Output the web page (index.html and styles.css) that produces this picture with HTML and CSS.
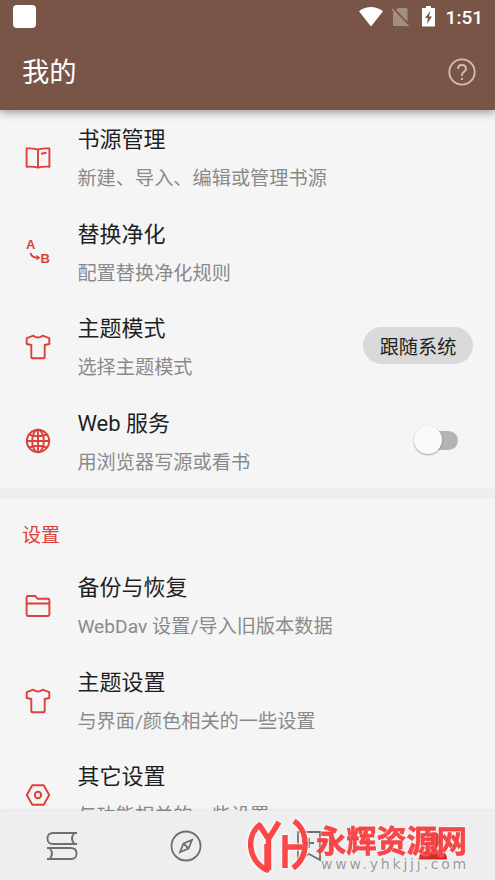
FILE: index.html
```html
<!DOCTYPE html>
<html lang="zh-CN">
<head>
<meta charset="utf-8">
<title>我的</title>
<link rel="stylesheet" href="styles.css">
</head>
<body>
<svg class="defs" width="0" height="0">
  <symbol id="shirt" viewBox="0 0 26 26"><path d="M8.500 1.700 1.700 4.200v5.800l4.600 1v12.300q0 1 1 1h11.400q1 0 1-1V11l4.600-1V4.200L17.500 1.700Q13 5.500 8.500 1.700Z"/></symbol>
</svg>
<div class="screen">
  <header class="top">
    <div class="status">
      <span class="app-square"></span>
      <svg class="wifi" width="24" height="20" viewBox="0 0 24 20"><path d="M0 4.200Q12-4 24 4.200L12 19.500Z"/></svg>
      <svg class="sim" width="20" height="20" viewBox="0 0 20 20"><path class="card" d="M7 1h8q1.500 0 1.500 1.500V18q0 1-1 1H3q-1 0-1-1V6Z"/><path class="gap" d="m2 1 17 18"/><path class="slash" d="m1 2 16.500 17.500"/></svg>
      <svg class="battery" width="14" height="21" viewBox="0 0 14 21"><path class="cell" d="M4 0h5v2h4v18.500H0V2h4Z"/><path class="bolt" d="M8.500 5 3 12h3l-1 6 5-7.500H7Z"/></svg>
      <span class="time">1:51</span>
    </div>
    <div class="bar">
      <h1>我的</h1>
      <svg class="help" width="28" height="28" viewBox="0 0 28 28"><circle cx="14" cy="14" r="12.700"/><path d="M10 11Q10 7 14 7t4 3.800c0 3-4 3-4 6.200v1"/><path d="M14 20v2"/></svg>
    </div>
  </header>

  <main class="list">
    <section class="row">
      <svg class="icon" viewBox="0 0 26 26"><path d="M13 4.500Q7 3 1.600 3.500v18.300Q7 21.300 13 22.500 19 21.300 24.400 21.800V3.500Q19 3 13 4.500ZM13 4.500v18M16 8.800l5.500-1"/></svg>
      <div class="text"><h2>书源管理</h2><p>新建、导入、编辑或管理书源</p></div>
    </section>
    <section class="row">
      <svg class="icon ab" viewBox="0 0 26 26"><text x="1" y="10">A</text><text x="15.500" y="24">B</text><path d="M5.500 14q1 4.500 7 4.700"/><path class="tip" d="m11.500 15.800 4 3-4 2.500Z"/></svg>
      <div class="text"><h2>替换净化</h2><p>配置替换净化规则</p></div>
    </section>
    <section class="row">
      <svg class="icon"><use href="#shirt"/></svg>
      <div class="text"><h2>主题模式</h2><p>选择主题模式</p></div>
      <button class="pill">跟随系统</button>
    </section>
    <section class="row">
      <svg class="icon" viewBox="0 0 26 26"><circle cx="13" cy="13" r="11.200"/><ellipse cx="13" cy="13" rx="5.800" ry="11.200"/><path d="M13 1.700v22.600M1.700 13h22.600M4 6.500q9 3.500 18 0M4 19.500q9-3.500 18 0"/></svg>
      <div class="text"><h2>Web 服务</h2><p>用浏览器写源或看书</p></div>
      <span class="switch"></span>
    </section>
    <div class="divider"></div>
    <h3>设置</h3>
    <section class="row">
      <svg class="icon" viewBox="0 0 26 26"><path d="M3 3h6.500q1 0 1.700 1l1.300 1.800H23q1.400 0 1.400 1.400v14.400q0 1.400-1.400 1.400H3q-1.400 0-1.400-1.400V4.400Q1.600 3 3 3ZM1.600 10.500h22.800"/></svg>
      <div class="text"><h2>备份与恢复</h2><p>WebDav 设置/导入旧版本数据</p></div>
    </section>
    <section class="row">
      <svg class="icon"><use href="#shirt"/></svg>
      <div class="text"><h2>主题设置</h2><p>与界面/颜色相关的一些设置</p></div>
    </section>
    <section class="row">
      <svg class="icon" viewBox="0 0 26 26"><path d="M7.300 3.200h11.400L24.200 13l-5.500 9.800H7.300L1.800 13Z"/><circle cx="13" cy="13" r="3.200"/></svg>
      <div class="text"><h2>其它设置</h2><p>与功能相关的一些设置</p></div>
    </section>
  </main>

  <nav class="nav">
    <svg viewBox="0 0 32 32"><path d="M31 3H7Q1.500 3 1.500 8.500T7 14h24M28.500 3q-5 5.500 0 11M1 18h24q5.500 0 5.500 5.500T25 29H1M3.500 18q5 5.500 0 11"/></svg>
    <svg viewBox="0 0 32 32"><circle cx="16" cy="16" r="14.500"/><path d="m22 10-3.500 8.500L10 22l3.500-8.500ZM13.500 13.500l5 5"/></svg>
    <svg viewBox="0 0 32 32"><path d="M5 2h22v28l-11-6-11 6ZM16 8v10M11 13h10"/></svg>
    <svg class="person" viewBox="0 0 32 32"><path d="M16 2c-6 0-7.500 4.500-7 9 .3 3 1.700 5 3 6.500v2L5 22.500q-3 1.500-3 7h28q0-5.500-3-7l-7-3v-2c1.300-1.500 2.700-3.500 3-6.500.5-4.500-1-9-7-9Z"/></svg>
  </nav>

  <div class="mark">
    <svg class="logo" width="60" height="60" viewBox="0 0 60 60"><path d="M13 8C-3 19 0 45 19 54V28"/><path d="M11 8.500 20.500 23 31 6M20.500 22v32"/><path d="M37 19v33M37 31h17M46 5c15 10 15 36-1 47"/></svg>
    <div class="words"><strong>永辉资源网</strong><span>www.yhkjjj.com</span></div>
  </div>
</div>
</body>
</html>
```
FILE: styles.css
```css
* { box-sizing: border-box; }
body { margin: 0; font-family: Roboto, "Noto Sans CJK SC", sans-serif; background: #f5f5f5; }
h1, h2, h3, p { margin: 0; font-weight: 400; white-space: nowrap; }
svg { fill: none; flex: none; }
.defs { position: absolute; }
.screen { position: relative; height: 880px; display: flex; flex-direction: column; overflow: hidden; }

.top { flex: none; height: 110px; background: #795548; color: #fff; box-shadow: 0 2px 9px rgba(0,0,0,.42); z-index: 2; }
.status { height: 33px; display: flex; align-items: center; padding: 0 12px 0 13px; }
.app-square { width: 23px; height: 23px; border-radius: 4px; background: #fff; margin-right: auto; }
.wifi { fill: #fff; }
.sim { margin-left: 8px; }
.sim .card { fill: #a58d84; }
.sim .gap { stroke: #795548; stroke-width: 2; }
.sim .slash { stroke: #a58d84; stroke-width: 1.6; }
.battery { margin-left: 11px; }
.battery .cell { fill: #fff; }
.battery .bolt { fill: #795548; }
.time { font-size: 19px; font-weight: 500; margin-left: 10px; padding-top: 1px; line-height: 33px; }
.bar { height: 77px; display: flex; align-items: center; justify-content: space-between; padding: 0 19px 0 22px; }
.bar h1 { font-size: 27.300px; line-height: 40px; padding-top: 2px; }
.help { stroke: #d0c0ba; stroke-width: 1.8; }

.list { flex: 1; min-height: 0; overflow: hidden; padding-top: .4px; }
.row { height: 94.4px; display: flex; align-items: center; padding-left: 25.400px; }
.icon { width: 26px; height: 26px; margin-top: 1px; stroke: #dc4039; stroke-width: 1.9; stroke-linejoin: round; }
.ab text { font: bold 13px "Liberation Sans", sans-serif; fill: #dc4039; stroke: none; }
.ab .tip { fill: #dc4039; stroke: none; }
.text { margin-left: 26px; flex: 1; padding-top: 3.600px; }
.text h2 { font-size: 22px; line-height: 40px; color: #1f1f1f; }
.text p { font-size: 19.200px; line-height: 38px; color: #8a8a8a; }
.pill { width: 110px; height: 37px; margin: 0 22px 1px 0; padding: 1px 0 0; border: 0; border-radius: 19px; background: #d9d9d9; color: #1f1f1f; font: 19.200px/39px Roboto, "Noto Sans CJK SC", sans-serif; }
.switch { position: relative; width: 36px; height: 19px; margin: 0 37.500px 1px 0; border-radius: 10px; background: #b3b3b3; }
.switch::before { content: ""; position: absolute; left: -8px; top: -4.500px; width: 28px; height: 28px; border-radius: 50%; background: #fafafa; box-shadow: 0 1px 2px rgba(0,0,0,.35); }
.divider { height: 11px; background: #eee; }
.list h3 { height: 59.500px; padding-left: 22px; font-size: 19px; line-height: 73px; color: #dc4039; }

.nav { flex: none; height: 69px; background: #eee; display: flex; align-items: center; box-shadow: 0 -1px 3px rgba(0,0,0,.08); z-index: 1; }
.nav svg { width: 32px; height: 32px; margin: 0 45.900px; stroke: #6e6e6e; stroke-width: 1.8; }
.nav .person { fill: #d82925; stroke: none; }

.mark { position: absolute; z-index: 3; left: 248px; top: 816px; display: flex; }
.logo { stroke: #fb4040; stroke-width: 5.5; stroke-linejoin: round; opacity: .95; filter: drop-shadow(0 0 1px #fff) drop-shadow(0 0 1px #fff); }
.words { margin: 4px 0 0 8px; display: flex; flex-direction: column; }
.words strong { font: 700 30.200px/38px "Noto Sans CJK SC", sans-serif; color: rgba(246,45,47,.88); -webkit-text-stroke: .8px rgba(242,55,57,.8); white-space: nowrap; filter: drop-shadow(0 0 1px #fff); }
.words span { margin: -1px 0 0 5px; font: 14px/14px "DejaVu Sans", sans-serif; letter-spacing: 2.800px; color: #999; text-shadow: 0 0 2px #fff; }
```
